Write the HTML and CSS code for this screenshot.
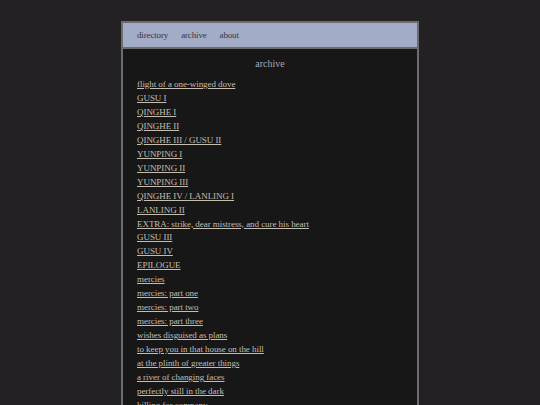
FILE: index.html
```html
<!DOCTYPE html>
<html>
<head>
<meta charset="utf-8">
<link rel="stylesheet" href="styles.css">
</head>
<body>
<div class="wrap">
  <nav class="nav">
    <a href="#">directory</a>
    <a href="#">archive</a>
    <a href="#">about</a>
  </nav>
  <main class="content">
    <h1 class="title">archive</h1>
    <ul class="list">
      <li><a href="#">flight of a one-winged dove</a></li>
      <li><a href="#">GUSU I</a></li>
      <li><a href="#">QINGHE I</a></li>
      <li><a href="#">QINGHE II</a></li>
      <li><a href="#">QINGHE III / GUSU II</a></li>
      <li><a href="#">YUNPING I</a></li>
      <li><a href="#">YUNPING II</a></li>
      <li><a href="#">YUNPING III</a></li>
      <li><a href="#">QINGHE IV / LANLING I</a></li>
      <li><a href="#">LANLING II</a></li>
      <li><a href="#">EXTRA: strike, dear mistress, and cure his heart</a></li>
      <li><a href="#">GUSU III</a></li>
      <li><a href="#">GUSU IV</a></li>
      <li><a href="#">EPILOGUE</a></li>
      <li><a href="#">mercies</a></li>
      <li><a href="#">mercies: part one</a></li>
      <li><a href="#">mercies: part two</a></li>
      <li><a href="#">mercies: part three</a></li>
      <li><a href="#">wishes disguised as plans</a></li>
      <li><a href="#">to keep you in that house on the hill</a></li>
      <li><a href="#">at the plinth of greater things</a></li>
      <li><a href="#">a river of changing faces</a></li>
      <li><a href="#">perfectly still in the dark</a></li>
      <li><a href="#">killing for company</a></li>
    </ul>
  </main>
</div>
</body>
</html>
```
FILE: styles.css
```css
html, body {
  margin: 0;
  padding: 0;
}
body {
  background: #232123;
  font-family: "Liberation Serif", "Times New Roman", serif;
  height: 405px;
  overflow: hidden;
}
.wrap {
  width: 294px;
  margin: 21px auto 0 121px;
  border: 2px solid #6c6c6e;
  border-bottom: none;
  background: #171717;
  min-height: 400px;
}
.nav {
  background: #a3acc6;
  height: 24px;
  border-bottom: 2px solid #6c6c6e;
  display: flex;
  align-items: center;
  gap: 13px;
  padding-left: 14px;
}
.nav a {
  color: #343646;
  text-decoration: none;
  font-size: 9px;
  letter-spacing: -0.15px;
}
.content {
  padding: 0 14px;
}
.title {
  margin: 0;
  padding-top: 9px;
  height: 27px;
  box-sizing: border-box;
  text-align: center;
  font-weight: normal;
  font-size: 10px;
  color: #a8a8b6;
}
.list {
  list-style: none;
  margin: 0;
  padding: 2px 0 0 0;
}
.list li {
  height: 13.96px;
  line-height: 13.96px;
  font-size: 9px;
  letter-spacing: -0.06px;
}
.list a {
  color: #c4bdb0;
  text-decoration: underline;
}
```
